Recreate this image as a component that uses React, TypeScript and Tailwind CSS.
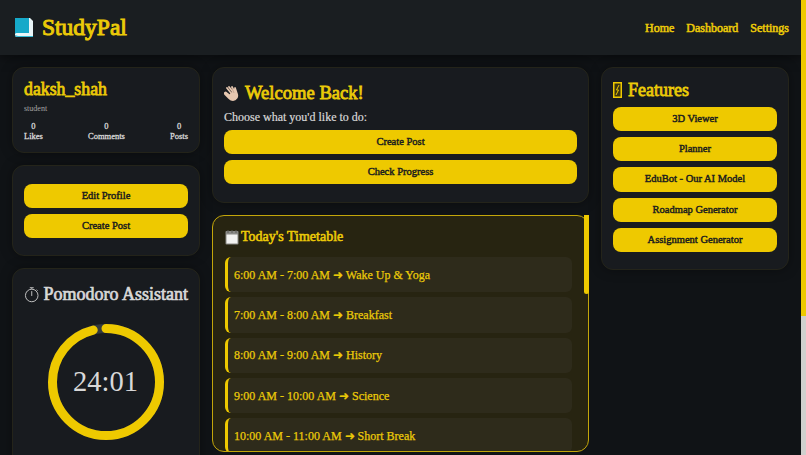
const serif = "font-['Liberation_Serif',serif]";
const Y = "text-[#ebca08]";

function Btn({ label }: { label: string }) {
  return (
    <button className="block h-[24.2px] w-full rounded-lg bg-[#eec900] text-center text-[10.5px] leading-[24px] text-[#1a1c1e] [-webkit-text-stroke:0.45px_#1a1c1e]">
      {label}
    </button>
  );
}

function Card({ className, children }: { className?: string; children: React.ReactNode }) {
  return (
    <div className={"rounded-xl border border-[#24241a] bg-[#181b1f] px-[11px] shadow-[0_0_12px_rgba(0,0,0,0.35)] " + (className ?? "")}>
      {children}
    </div>
  );
}

function Stat({ n, label }: { n: number; label: string }) {
  return (
    <div className="flex flex-col items-center text-[8.5px] leading-[10px] text-[#d8d8d8] [-webkit-text-stroke:0.3px_#d8d8d8]">
      <span>{n}</span>
      <span>{label}</span>
    </div>
  );
}

const slots = [
  "6:00 AM - 7:00 AM ➜ Wake Up & Yoga",
  "7:00 AM - 8:00 AM ➜ Breakfast",
  "8:00 AM - 9:00 AM ➜ History",
  "9:00 AM - 10:00 AM ➜ Science",
  "10:00 AM - 11:00 AM ➜ Short Break",
];

export default function App() {
  return (
    <div className={"flex h-screen w-full overflow-hidden bg-[#101316] " + serif}>
      <div className="min-w-0 flex-1">
        <header className="flex h-[55px] items-center justify-between bg-[#1a1e21] pl-[14px] pr-[12px] shadow-[0_2px_10px_rgba(0,0,0,0.5)]">
          <div className="flex items-center gap-[8px]">
            <svg width="20" height="21" viewBox="0 0 20 21">
              <path d="M1 1h15l3 3v16H3a2 2 0 0 1-2-2z" fill="#eaf6f8" />
              <path d="M1 1h14v15H3a2 2 0 0 0-2 1z" fill="#16a9c9" />
              <path d="M1 18a2 2 0 0 0 2 2h16v-1H4z" fill="#35b9d4" />
            </svg>
            <span className={"text-[23.5px] leading-none [-webkit-text-stroke:1px_#ebca08] " + Y}>StudyPal</span>
          </div>
          <nav className={"flex gap-[12px] text-[12px] [-webkit-text-stroke:0.55px_#ebca08] " + Y}>
            <span>Home</span>
            <span>Dashboard</span>
            <span>Settings</span>
          </nav>
        </header>

        <main className="grid grid-cols-[188px_377px_188px] gap-3 px-3 pt-3">
          <div className="flex flex-col gap-3">
            <Card className="h-[86px] pt-[10px]">
              <div className={"text-[17.8px] leading-[22px] [-webkit-text-stroke:0.8px_#ebca08] " + Y}>daksh_shah</div>
              <div className="mt-[4px] text-[8px] leading-[10px] text-[#a5a5a5]">student</div>
              <div className="mt-[7px] flex justify-between">
                <Stat n={0} label="Likes" />
                <Stat n={0} label="Comments" />
                <Stat n={0} label="Posts" />
              </div>
            </Card>
            <Card className="flex h-[91px] flex-col gap-[6px] pt-[18px]">
              <Btn label="Edit Profile" />
              <Btn label="Create Post" />
            </Card>
            <Card className="h-[360px] pt-[13px]">
              <div className="flex items-center justify-center gap-[4px] whitespace-nowrap text-[18px] leading-[24px] text-[#d8d8d8] [-webkit-text-stroke:0.7px_#d8d8d8]">
                <svg width="16" height="17" viewBox="0 0 16 17" fill="none" stroke="#c4c4c4" strokeWidth="1">
                  <circle cx="8" cy="9.5" r="6.5" />
                  <path d="M6 1.5h4M8 2v1M8 5v5M13 3.5l1 1" />
                </svg>
                <span>Pomodoro Assistant</span>
              </div>
              <div className="relative mx-auto mt-[18px] h-[116px] w-[116px]">
                <svg width="116" height="116" viewBox="0 0 116 116" className="-rotate-90">
                  <circle cx="58" cy="58" r="53.5" fill="none" stroke="#343a3c" strokeWidth="9" />
                  <circle cx="58" cy="58" r="53.5" fill="none" stroke="#eec900" strokeWidth="9" strokeLinecap="round" strokeDasharray="322.7 336.2" />
                </svg>
                <span className="absolute inset-0 flex items-center justify-center pr-[1px] text-[28.5px] text-[#d8d8d8]">24:01</span>
              </div>
            </Card>
          </div>

          <div className="flex flex-col gap-3 self-start">
            <Card className="h-[136px] pt-[13px]">
              <div className={"flex items-center gap-[5px] text-[18.6px] leading-[24px] [-webkit-text-stroke:0.8px_#ebca08] " + Y}>
                <svg width="16" height="16" viewBox="0 0 16 16">
                  <path d="M3 3l4 5M5 2l4 5M8 2l3 6M11 3l2 6c1 3-1 6-4 6-2 0-3-1-4-2L1 9c-.7-1 .5-2 1.4-1L5 10" fill="#e6c7b0" stroke="#e6c7b0" strokeWidth="1.8" strokeLinecap="round" strokeLinejoin="round" />
                  <path d="M5 4l3 4M8 3l2 5" stroke="#a98d7c" strokeWidth="0.5" fill="none" />
                </svg>
                <span>Welcome Back!</span>
              </div>
              <div className="mt-[4px] text-[12px] leading-[16px] text-[#d8d8d8] [-webkit-text-stroke:0.2px_#d8d8d8]">Choose what you'd like to do:</div>
              <div className="mt-[5px] flex flex-col gap-[6px]">
                <Btn label="Create Post" />
                <Btn label="Check Progress" />
              </div>
            </Card>
            <div className="relative h-[237px]">
              <div className="h-full overflow-hidden rounded-xl border border-[#c3a60a] bg-[#272411] py-[11px] pl-3 pr-[16px]">
                <div className={"flex items-center gap-[2px] text-[14px] leading-[20px] [-webkit-text-stroke:0.6px_#ebca08] " + Y}>
                  <svg width="14" height="15" viewBox="0 0 14 15">
                    <rect x="0.5" y="1" width="13" height="13.5" rx="1" fill="#8a8a86" />
                    <rect x="1.5" y="4.5" width="11" height="9" fill="#f2f2f0" />
                    <path d="M3 0v3M7 0v3M11 0v3" stroke="#5c5c58" strokeWidth="1" />
                  </svg>
                  <span>Today's Timetable</span>
                </div>
                <div className="mt-[10px] flex flex-col gap-[5px]">
                  {slots.map((s) => (
                    <div key={s} className={"flex h-[35.3px] shrink-0 items-center rounded-md border-l-[3px] border-[#eec900] bg-[#2e2b1b] pl-[6px] text-[12px] [-webkit-text-stroke:0.25px_#ebca08] " + Y}>
                      {s}
                    </div>
                  ))}
                </div>
              </div>
              <div className="absolute right-0 top-0 h-[79px] w-[5px] rounded-tr-xl rounded-b-full bg-[#eec900]" />
            </div>
          </div>

          <Card className="h-[203px] self-start pt-[10px]">
            <div className={"flex items-center gap-[6px] text-[18px] leading-[24px] [-webkit-text-stroke:0.8px_#ebca08] " + Y}>
              <svg width="9" height="16" viewBox="0 0 9 16">
                <rect width="9" height="16" fill="#eec900" />
                <rect x="1.5" y="1.5" width="6" height="13" fill="#3a3410" />
                <path d="M6 3L3.5 8H5.5L3 13" stroke="#eec900" strokeWidth="1" fill="none" />
              </svg>
              <span>Features</span>
            </div>
            <div className="mt-[5px] flex flex-col gap-[6px]">
              {["3D Viewer", "Planner", "EduBot - Our AI Model", "Roadmap Generator", "Assignment Generator"].map((l) => (
                <Btn key={l} label={l} />
              ))}
            </div>
          </Card>
        </main>
      </div>
      <div className="h-full w-[5px] shrink-0 bg-[#d0d0ce]">
        <div className="h-[316px] bg-[#eec900]" />
      </div>
    </div>
  );
}
